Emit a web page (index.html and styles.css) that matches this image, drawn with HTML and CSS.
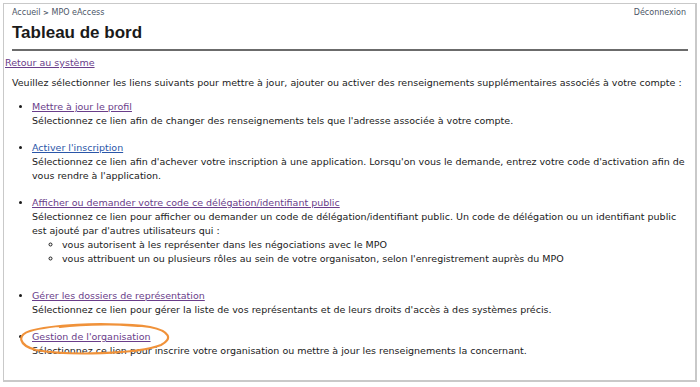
FILE: index.html
```html
<!DOCTYPE html>
<html lang="fr">
<head>
  <meta charset="UTF-8">
  <meta name="viewport" content="width=device-width, initial-scale=1.0">
  <title>Tableau de bord - MPO eAccess</title>
  <link rel="stylesheet" href="styles.css">
</head>
<body>
  <div class="cadre">
    <header class="entete">
      <div class="barre-haut">
        <span class="fil">Accueil <b>&gt;</b> MPO eAccess</span>
        <a href="#" class="deconnexion">Déconnexion</a>
      </div>
      <h1>Tableau de bord</h1>
    </header>

    <a href="#" class="retour visite">Retour au système</a>

    <div class="contenu">
      <p class="intro">Veuillez sélectionner les liens suivants pour mettre à jour, ajouter ou activer des renseignements supplémentaires associés à votre compte :</p>

      <ul class="liens">
        <li>
          <a href="#" class="visite">Mettre à jour le profil</a><br>
          Sélectionnez ce lien afin de changer des renseignements tels que l'adresse associée à votre compte.
        </li>
        <li>
          <a href="#">Activer l'inscription</a><br>
          Sélectionnez ce lien afin d'achever votre inscription à une application. Lorsqu'on vous le demande, entrez votre code d'activation afin de vous rendre à l'application.
        </li>
        <li>
          <a href="#" class="visite">Afficher ou demander votre code ce délégation/identifiant public</a><br>
          Sélectionnez ce lien pour afficher ou demander un code de délégation/identifiant public. Un code de délégation ou un identifiant public est ajouté par d'autres utilisateurs qui :
          <ul class="sous-liste">
            <li>vous autorisent à les représenter dans les négociations avec le MPO</li>
            <li>vous attribuent un ou plusieurs rôles au sein de votre organisaton, selon l'enregistrement auprès du MPO</li>
          </ul>
        </li>
        <li>
          <a href="#" class="visite">Gérer les dossiers de représentation</a><br>
          Sélectionnez ce lien pour gérer la liste de vos représentants et de leurs droits d'accès à des systèmes précis.
        </li>
        <li class="entoure">
          <a href="#" class="visite">Gestion de l'organisation</a><br>
          Sélectionnez ce lien pour inscrire votre organisation ou mettre à jour les renseignements la concernant.
          <!-- annotation a main levee par-dessus le lien -->
          <svg class="ellipse" width="156" height="34" viewBox="0 0 156 34">
            <path d="M 122 4 C 84 0, 34 3, 14 9 C 1 13, 2 23, 20 28 C 52 34, 122 32, 145 23 C 157 17, 154 9, 134 5 C 112 1, 66 2, 44 5" fill="none" stroke="#f0923a" stroke-width="2.2" stroke-linecap="round"/>
          </svg>
        </li>
      </ul>
    </div>
  </div>
</body>
</html>
```

FILE: styles.css
```css
body {
  margin: 0;
  padding: 0;
  background-color: #ffffff;
  font-family: "DejaVu Sans", Verdana, sans-serif;
  color: #1a1a1a;
}

.cadre {
  margin: 3px;
  height: 379px;
  width: 694px;
  border: 2px solid #c9c9c9;
  border-top-width: 1px;
  border-left-width: 1px;
  box-sizing: border-box;
}

.entete {
  margin: 0 7px 0 8px;
  border-bottom: 2px solid #6b6b6b;
}

.barre-haut {
  display: flex;
  justify-content: space-between;
  align-items: center;
  height: 14px;
  padding-top: 1px;
  font-size: 8px;
  color: #4b5566;
}

.fil b {
  font-size: 7px;
}

.deconnexion {
  color: #4b5566;
  text-decoration: none;
  margin-right: 2px;
}

.entete h1 {
  font-family: "Liberation Sans", Arial, sans-serif;
  font-size: 17px;
  font-weight: bold;
  color: #1a1a1a;
  margin: 0;
  padding: 4px 0 6px 0;
  line-height: 20px;
}

a {
  color: #2a56a8;
}

a.visite {
  color: #6a3d8a;
}

.retour {
  display: inline-block;
  font-size: 9.5px;
  line-height: 14px;
  margin-top: 5px;
  margin-left: 1px;
}

.contenu {
  padding: 0 7px 0 8px;
  font-size: 9.5px;
  line-height: 14px;
}

.intro {
  margin: 6px 0 10px 0;
}

.liens {
  margin: 0;
  padding-left: 20px;
}

.liens > li {
  margin-bottom: 13px;
  position: relative;
}

.sous-liste {
  list-style-type: circle;
  margin: 0 0 23px 0;
  padding-left: 30px;
}

.ellipse {
  position: absolute;
  left: -16px;
  top: -8px;
}
```
